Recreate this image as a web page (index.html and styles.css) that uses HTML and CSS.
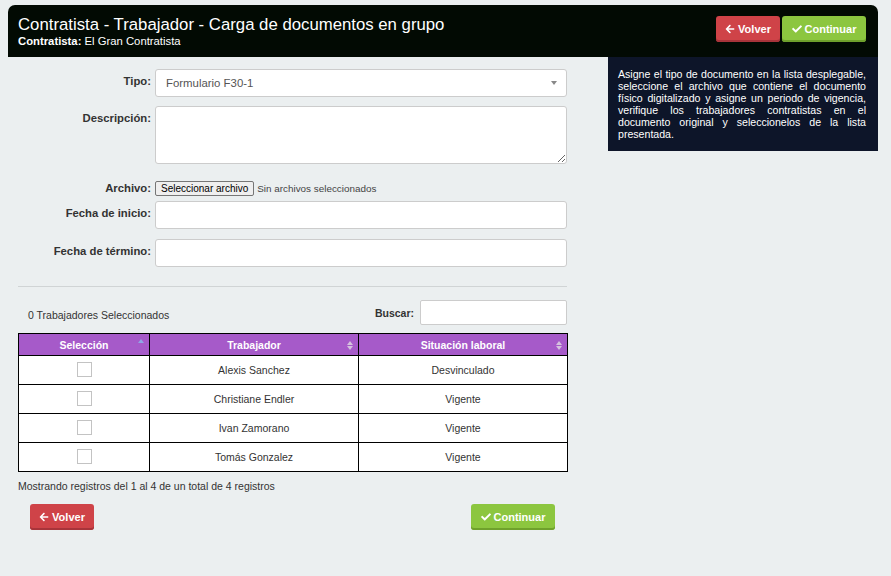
FILE: index.html
```html
<!DOCTYPE html>
<html lang="es">
<head>
<meta charset="utf-8">
<title>Carga de documentos en grupo</title>
<link rel="stylesheet" href="styles.css">
</head>
<body>
<div class="page">
  <header class="topbar">
    <div class="titles">
      <h1 class="title">Contratista - Trabajador - Carga de documentos en grupo</h1>
      <div class="subtitle"><b>Contratista:</b> El Gran Contratista</div>
    </div>
    <div class="actions">
      <button class="btn btn-red"><svg class="ico" viewBox="0 0 448 512"><path d="M257.5 445.1l-22.2 22.2c-9.4 9.4-24.6 9.4-33.9 0L7 273c-9.4-9.4-9.4-24.6 0-33.9L201.4 44.7c9.4-9.4 24.6-9.4 33.9 0l22.2 22.2c9.5 9.5 9.3 25-.4 34.3L136.6 216H424c13.3 0 24 10.7 24 24v32c0 13.3-10.7 24-24 24H136.6l120.5 114.8c9.8 9.3 10 24.8.4 34.3z"/></svg>Volver</button>
      <button class="btn btn-green"><svg class="ico" viewBox="0 0 512 512"><path d="M173.898 439.404l-166.4-166.4c-9.997-9.997-9.997-26.206 0-36.204l36.203-36.204c9.997-9.998 26.207-9.998 36.204 0L192 312.69 432.095 72.596c9.997-9.997 26.207-9.997 36.204 0l36.203 36.204c9.997 9.997 9.997 26.206 0 36.204l-294.4 294.401c-9.998 9.997-26.207 9.997-36.204-.001z"/></svg>Continuar</button>
    </div>
  </header>

  <div class="content">
    <main class="main">
      <div class="form">
        <label class="lbl">Tipo:</label>
        <div class="field f-tipo">
          <div class="select"><span>Formulario F30-1</span><i class="caret"></i></div>
        </div>

        <label class="lbl">Descripción:</label>
        <div class="field f-desc"><textarea class="textarea"></textarea></div>

        <label class="lbl lbl-file">Archivo:</label>
        <div class="field f-file"><span class="filebtn">Seleccionar archivo</span><span class="filetxt">Sin archivos seleccionados</span></div>

        <label class="lbl">Fecha de inicio:</label>
        <div class="field f-date1"><div class="input"></div></div>

        <label class="lbl">Fecha de término:</label>
        <div class="field f-date2"><div class="input"></div></div>
      </div>

      <section class="listing">
        <hr class="sep">
        <div class="toolbar">
          <span class="count">0 Trabajadores Seleccionados</span>
          <div class="search"><span class="search-lbl">Buscar:</span><div class="search-input"></div></div>
        </div>
        <table class="grid">
          <thead>
            <tr>
              <th class="c1">Selección<span class="sort sort-asc"></span></th>
              <th class="c2">Trabajador<span class="sort sort-both"></span></th>
              <th class="c3">Situación laboral<span class="sort sort-both"></span></th>
            </tr>
          </thead>
          <tbody>
            <tr><td><span class="chk"></span></td><td>Alexis Sanchez</td><td>Desvinculado</td></tr>
            <tr><td><span class="chk"></span></td><td>Christiane Endler</td><td>Vigente</td></tr>
            <tr><td><span class="chk"></span></td><td>Ivan Zamorano</td><td>Vigente</td></tr>
            <tr><td><span class="chk"></span></td><td>Tomás Gonzalez</td><td>Vigente</td></tr>
          </tbody>
        </table>
        <div class="info">Mostrando registros del 1 al 4 de un total de 4 registros</div>
        <div class="bottom-actions">
          <button class="btn btn-red"><svg class="ico" viewBox="0 0 448 512"><path d="M257.5 445.1l-22.2 22.2c-9.4 9.4-24.6 9.4-33.9 0L7 273c-9.4-9.4-9.4-24.6 0-33.9L201.4 44.7c9.4-9.4 24.6-9.4 33.9 0l22.2 22.2c9.5 9.5 9.3 25-.4 34.3L136.6 216H424c13.3 0 24 10.7 24 24v32c0 13.3-10.7 24-24 24H136.6l120.5 114.8c9.8 9.3 10 24.8.4 34.3z"/></svg>Volver</button>
          <button class="btn btn-green"><svg class="ico" viewBox="0 0 512 512"><path d="M173.898 439.404l-166.4-166.4c-9.997-9.997-9.997-26.206 0-36.204l36.203-36.204c9.997-9.998 26.207-9.998 36.204 0L192 312.69 432.095 72.596c9.997-9.997 26.207-9.997 36.204 0l36.203 36.204c9.997 9.997 9.997 26.206 0 36.204l-294.4 294.401c-9.998 9.997-26.207 9.997-36.204-.001z"/></svg>Continuar</button>
        </div>
      </section>
    </main>

    <aside class="help">Asigne el tipo de documento en la lista desplegable, seleccione el archivo que contiene el documento físico digitalizado y asigne un periodo de vigencia, verifique los trabajadores contratistas en el documento original y seleccionelos de la lista presentada.</aside>
  </div>
</div>
</body>
</html>
```

FILE: styles.css
```css
* { box-sizing: border-box; }

html, body {
  margin: 0;
  padding: 0;
  background: #ebeff0;
}

body {
  font-family: "Liberation Sans", Arial, sans-serif;
  color: #333;
  font-size: 11.25px;
}

.page {
  width: 870px;
  margin: 5px 0 0 8px;
}

/* Header */
.topbar {
  height: 52px;
  background: #020a03;
  border-radius: 7px 7px 0 0;
  display: flex;
  justify-content: space-between;
  align-items: flex-start;
  padding: 10px 12px 0 10px;
}

.title {
  margin: 0;
  font-weight: normal;
  font-size: 16.75px;
  line-height: 20px;
  color: #fff;
}

.subtitle {
  color: #fff;
  font-size: 11.3px;
  line-height: 14px;
  margin-top: -1px;
}

.actions {
  display: flex;
  gap: 2px;
  margin-top: 1px;
}

/* Buttons */
.btn {
  height: 26px;
  border: 0;
  border-radius: 3px;
  color: #fff;
  font-family: "Liberation Sans", Arial, sans-serif;
  font-weight: bold;
  font-size: 11px;
  display: inline-flex;
  align-items: center;
  justify-content: center;
  gap: 3px;
  padding: 0 0 1px;
  cursor: pointer;
}

.btn-red {
  width: 64px;
  background: #cf4348;
  box-shadow: inset 0 -2px 0 #a8343a;
}

.btn-green {
  width: 84px;
  background: #8cc63f;
  box-shadow: inset 0 -2px 0 #6fa12c;
}

.ico {
  width: 10px;
  height: 10px;
  fill: #fff;
}

/* Content */
.content {
  display: flex;
  align-items: flex-start;
}

.main {
  width: 600px;
  padding-top: 12px;
}

.help {
  width: 270px;
  background: #0d1529;
  color: #fff;
  font-size: 10.6px;
  line-height: 12px;
  text-align: justify;
  padding: 11px 12px 11px 10px;
}

/* Form */
.form {
  display: grid;
  grid-template-columns: 143px 412px;
  column-gap: 4px;
}

.lbl {
  text-align: right;
  font-weight: bold;
  font-size: 11.3px;
  line-height: 14px;
  padding-top: 5px;
  color: #333;
}

.lbl-file {
  padding-top: 0;
}

.f-tipo { margin-bottom: 9px; }
.f-desc { margin-bottom: 17px; }
.f-file { margin-bottom: 5px; }
.f-date1 { margin-bottom: 10px; }

.select {
  height: 28px;
  background: #fff;
  border: 1px solid #ccc;
  border-radius: 3px;
  display: flex;
  align-items: center;
  justify-content: space-between;
  padding: 0 9px 0 10px;
  font-size: 11.4px;
  color: #555;
}

.caret {
  width: 0;
  height: 0;
  border-left: 3.5px solid transparent;
  border-right: 3.5px solid transparent;
  border-top: 4px solid #888;
}

.textarea {
  display: block;
  width: 412px;
  height: 58px;
  margin: 0;
  border: 1px solid #ccc;
  border-radius: 3px;
  background: #fff;
  resize: vertical;
}

.f-file {
  display: flex;
  align-items: center;
  height: 15px;
}

.filebtn {
  display: inline-block;
  height: 15px;
  line-height: 13px;
  padding: 0 5px;
  border: 1px solid #767676;
  border-radius: 2px;
  background: #efefef;
  color: #000;
  font-size: 10px;
  margin-right: 3px;
}

.filetxt {
  font-size: 9.9px;
  color: #444;
}

.input {
  height: 28px;
  background: #fff;
  border: 1px solid #ccc;
  border-radius: 3px;
}

/* Listing */
.listing {
  width: 549px;
  margin-left: 10px;
}

.sep {
  margin: 19px 0 0;
  border: 0;
  border-top: 1px solid #d0d4d5;
  height: 0;
}

.toolbar {
  display: flex;
  justify-content: space-between;
  align-items: center;
  margin-top: 13px;
  padding-left: 10px;
}

.count {
  font-size: 10.5px;
  padding-top: 5px;
}

.search {
  display: flex;
  align-items: center;
  gap: 6px;
}

.search-lbl {
  font-weight: bold;
  font-size: 10.5px;
}

.search-input {
  width: 147px;
  height: 25px;
  background: #fff;
  border: 1px solid #ccc;
  border-radius: 2px;
}

.grid {
  margin-top: 8px;
  width: 550px;
  border-collapse: collapse;
  font-size: 10.5px;
  table-layout: fixed;
}

.grid th, .grid td {
  border: 1px solid #000;
  text-align: center;
}

.grid th {
  background: #a65ac9;
  color: #fff;
  font-weight: bold;
  height: 22px;
  padding: 0 8px;
  position: relative;
}

.grid th.c1 { width: 131px; }
.grid th.c2 { width: 209px; }
.grid th.c3 { width: 209px; }

.grid td {
  height: 29px;
  background: #fff;
  color: #333;
  padding: 0 8px 1px;
}

.sort {
  position: absolute;
  right: 5px;
  top: 7px;
  width: 6px;
  height: 9px;
}

.sort::before, .sort::after {
  content: "";
  position: absolute;
  left: 0;
  width: 0;
  height: 0;
  border-left: 3px solid transparent;
  border-right: 3px solid transparent;
}

.sort-both::before {
  top: 0;
  border-bottom: 4px solid #d5c2de;
}

.sort-both::after {
  bottom: 0;
  border-top: 4px solid #d5c2de;
}

.sort-asc { top: 5px; }

.sort-asc::before {
  top: 0;
  border-bottom: 4px solid #8fa7e6;
}

.chk {
  display: inline-block;
  vertical-align: middle;
  width: 15px;
  height: 15px;
  background: #fff;
  border: 1px solid #c3c3c3;
}

.info {
  margin-top: 8px;
  font-size: 10.5px;
  line-height: 12px;
  color: #333;
}

.bottom-actions {
  display: flex;
  justify-content: space-between;
  padding: 0 12px;
  margin-top: 12px;
}
```
